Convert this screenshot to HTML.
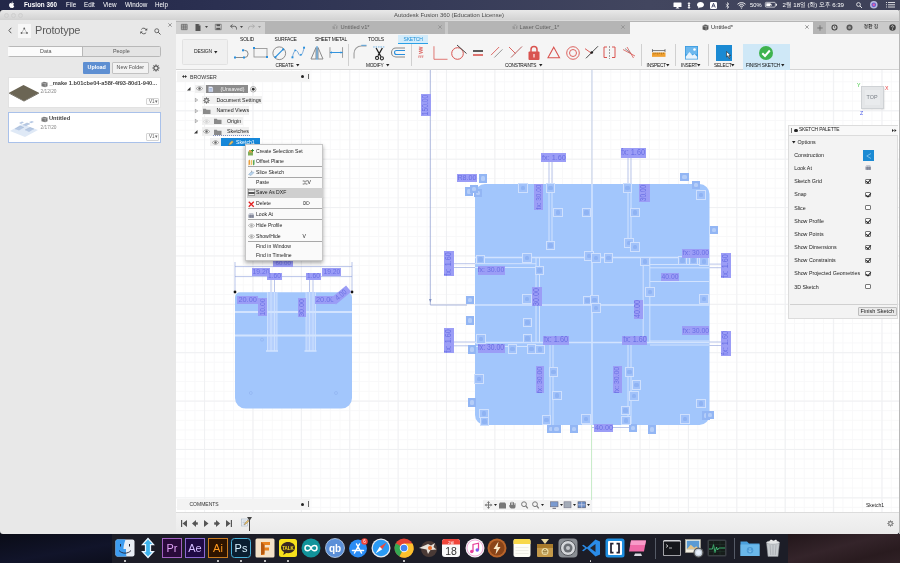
<!DOCTYPE html>
<html lang="ko">
<head>
<meta charset="utf-8">
<title>Autodesk Fusion 360 (Education License)</title>
<style>
*{box-sizing:border-box;margin:0;padding:0}
html,body{width:900px;height:563px;overflow:hidden}
body{position:relative;background:#0b0d18;font-family:"Liberation Sans","NanumGothic","Noto Sans CJK KR",sans-serif;color:#222}
.abs{position:absolute}
.t{position:absolute;white-space:nowrap;line-height:1}
svg{position:absolute;overflow:visible}
/* desktop */
#deskL{left:0;top:534px;width:112px;height:29px;background:linear-gradient(170deg,#0a0c17,#11142a 60%,#0c0e1c)}
#deskR{left:788px;top:534px;width:112px;height:29px;background:linear-gradient(165deg,#22161a,#34242a 45%,#291b1f 75%,#302126)}
#deskEdge{left:899px;top:10px;width:1px;height:524px;background:#b8b8b8}
/* mac menubar */
#menubar{left:0;top:0;width:900px;height:10px;background:linear-gradient(to right,#232849 0%,#252a4b 12%,#2b3051 24%,#363b58 48%,#42465f 72%,#3e4158 100%)}
#menubar .t{color:#fff;font-size:6.3px;top:2px}
/* window title */
#titlebar{left:0;top:10px;width:899px;height:10px;background:linear-gradient(#e9e9e9,#d2d2d2);border-top-left-radius:3px;border-top-right-radius:1px}
#titlebar .t{font-size:5.95px;color:#4c4c4c;top:2.5px}
.tl{position:absolute;top:2.5px;width:5px;height:5px;border-radius:50%;background:#dadada;border:.5px solid #cecece}
/* data panel */
#panel{left:0;top:20px;width:176.5px;height:514px;background:#e8e8e8;overflow:hidden;border-bottom-left-radius:3px}
#panel .t{color:#555}
.card{position:absolute;left:7.5px;width:153px;height:30px;background:#fff;border:.5px solid #e2e2e2}
.vbtn{position:absolute;left:137.5px;top:19.5px;width:13px;height:7.5px;border:.5px solid #d4d4d4;border-radius:1px;background:#fcfcfc;font-size:4.6px;color:#666;line-height:6.5px;padding-left:2px}
/* fusion */
#fusion{left:176px;top:20px;width:723px;height:514px;background:#fff;overflow:hidden;border-bottom-right-radius:3px}
#tabbar{left:0;top:0;width:723px;height:14px;background:linear-gradient(#dcdcdc 1.5px,#b5b5b5 1.5px)}
#tabbar .t{font-size:5.5px;color:#555;top:4.5px}
#toolbar{left:0;top:14px;width:723px;height:36px;background:#f5f5f5;border-bottom:.5px solid #d4d4d4}
#toolbar .t{font-size:5px;letter-spacing:-.2px;color:#111}
.rt{top:2.5px}
#toolbar .gl{top:30.2px;font-size:4.8px}
.sep{position:absolute;top:10px;width:.5px;height:22px;background:#d0d0d0}
#canvas{left:0;top:50px;width:723px;height:442px;background-color:#fff;
background-image:
linear-gradient(to right,#eff0f2 .6px,transparent .6px),
linear-gradient(to bottom,#eff0f2 .6px,transparent .6px),
linear-gradient(to right,#f8f8f9 .6px,transparent .6px),
linear-gradient(to bottom,#f8f8f9 .6px,transparent .6px);
background-size:48.4px 48.4px,48.4px 48.4px,9.68px 9.68px,9.68px 9.68px;
background-position:28.1px 0,0 40.3px,28.1px 0,0 40.3px}
#timeline{left:0;top:492px;width:723px;height:22px;background:linear-gradient(#f3f3f3,#eaeaea);border-top:.5px solid #dcdcdc}
/* browser */
.brow{position:absolute;height:8.6px;font-size:5.3px;line-height:8.6px;color:#222;white-space:nowrap;padding:0 2px}
/* context menu */
#ctx{left:69px;top:74px;width:78px;height:117px;background:#fafafa;border:.5px solid #c6c6c6;box-shadow:0 1.5px 4px rgba(0,0,0,.35)}
#ctx .t{font-size:5.1px;color:#222;left:10px;margin-top:-.4px}
#ctx .k{left:56.500px}
#ctx .hr{position:absolute;left:1.5px;width:74px;height:.6px;background:#a8a8a8}
/* palette */
#pal{left:612px;top:54.5px;width:110px;height:194px;background:#f3f3f3;border:.5px solid #dcdcdc}
#pal .t{font-size:5.3px;color:#222;left:5.2px}
.cb{position:absolute;left:76px;width:5.6px;height:5.6px;border:.6px solid #777;border-radius:1px;background:#fdfdfd}
.cb.on:after{content:"";position:absolute;left:1px;top:-1.2px;width:2px;height:4px;border:solid #222;border-width:0 1px 1px 0;transform:rotate(40deg)}
/* sketch */
.dim{position:absolute;background:#9b9df6;color:#6a70e4;font-size:6.3px;line-height:1;white-space:nowrap;text-align:center;overflow:hidden}
.dv{position:absolute;left:50%;top:50%;display:block;line-height:1}
.ci{position:absolute;width:9.6px;height:9.6px;background:#a1c2fa;border:.9px solid #cfe0fd}
.ci:after{content:"";position:absolute;left:1.8px;top:1.8px;width:4.2px;height:4.2px;background:#8fb3f3;border-radius:1.5px}
.ci.co{background:#93b6f4;border:0;width:8.2px;height:8.2px}
.ci.co:after{left:2px;top:2px;background:#b4cdf8}
/* dock */
#dock{left:112px;top:534px;width:676px;height:29px;background:#1c1d27}
.di{position:absolute;top:3.5px;width:20px;height:20px}
.dot{position:absolute;top:26px;width:1.6px;height:1.6px;border-radius:50%;background:#ddd}
</style>
</head>
<body>
<div id="root" style="position:absolute;left:0;top:0;width:900px;height:563px;will-change:transform">
<div id="deskL" class="abs"></div>
<div id="deskR" class="abs"></div>
<div id="deskEdge" class="abs"></div>
<div id="menubar" class="abs">
  <svg style="left:9px;top:1px" width="6" height="7.5" viewBox="0 0 24 30"><path fill="#fff" d="M17.6 15.9c0-3.300 2.700-4.900 2.800-5-1.500-2.200-3.900-2.500-4.700-2.600-2-.2-3.900 1.200-4.900 1.200s-2.600-1.200-4.200-1.100c-2.200 0-4.200 1.300-5.300 3.200-2.300 3.900-.6 9.700 1.600 12.900 1.100 1.600 2.400 3.300 4.100 3.300 1.600-.1 2.300-1.100 4.200-1.100 2 0 2.500 1.100 4.300 1 1.800 0 2.900-1.600 3.900-3.200 1.200-1.800 1.700-3.600 1.800-3.700-.1 0-3.500-1.300-3.600-4.900zM14.400 6.200c.9-1.100 1.500-2.600 1.300-4.200-1.300.1-2.900.9-3.800 2-.8.900-1.600 2.500-1.400 4 1.500.1 3-.7 3.900-1.800z"/></svg>
  <span class="t" style="left:24px;font-weight:bold">Fusion 360</span>
  <span class="t" style="left:66px">File</span>
  <span class="t" style="left:84px">Edit</span>
  <span class="t" style="left:103px">View</span>
  <span class="t" style="left:125px">Window</span>
  <span class="t" style="left:155px">Help</span>
  <!-- right status icons -->
  <svg style="left:673px;top:1.5px" width="9" height="7" viewBox="0 0 18 14"><rect x="1" y="1" width="16" height="9" rx="1" fill="#fff"/><path d="M5 13h8l-4-4z" fill="#fff"/></svg>
  <svg style="left:686.5px;top:1.5px" width="4" height="7" viewBox="0 0 8 14"><path d="M4 0v14M1.500 3h5M1.500 11h5" stroke="#fff" stroke-width="1.600" fill="none"/><circle cx="4" cy="7" r="2" fill="#fff"/></svg>
  <svg style="left:696.5px;top:1.8px" width="7" height="6.500" viewBox="0 0 14 13"><path d="M7 0C3.100 0 0 2.500 0 5.500c0 1.800 1.100 3.400 2.800 4.400L2 13l3.500-2.200c.5.100 1 .1 1.500.1 3.900 0 7-2.400 7-5.400S10.900 0 7 0z" fill="#fff"/></svg>
  <svg style="left:710px;top:1.500px" width="7" height="7" viewBox="0 0 14 14"><rect width="14" height="14" rx="2.500" fill="#fff"/><path d="M3.500 11 7 2.500 10.500 11M4.800 8h4.400" stroke="#20254a" stroke-width="1.500" fill="none"/></svg>
  <svg style="left:725px;top:1.500px" width="5" height="7" viewBox="0 0 10 14"><path d="M1.500 4 8 10 5 13V1l3 3-6.500 6" stroke="#fff" stroke-width="1.100" fill="none"/></svg>
  <svg style="left:737px;top:1.800px" width="9" height="6.500" viewBox="0 0 18 13"><path d="M1 4.500a11.500 11.500 0 0 1 16 0M3.600 7.200a7.700 7.700 0 0 1 10.800 0M6.200 9.800a4 4 0 0 1 5.600 0" stroke="#fff" stroke-width="1.800" fill="none"/><circle cx="9" cy="12" r="1.200" fill="#fff"/></svg>
  <span class="t" style="left:750px;font-size:5.8px;top:2.9px">50%</span>
  <svg style="left:764.5px;top:2.300px" width="12" height="5.500" viewBox="0 0 24 11"><rect x=".7" y=".7" width="20" height="9.600" rx="2" fill="none" stroke="#fff" stroke-width="1.300"/><rect x="22" y="3.500" width="1.800" height="4" fill="#fff"/><rect x="2.500" y="2.500" width="8" height="6" fill="#fff"/><path d="M12 1.500 9 6h3l-1 3.500L14.500 5h-3z" fill="#fff"/></svg>
  <span class="t" style="left:782.5px;font-size:6.1px;top:2px">2월 18일 (화) 오후 6:39</span>
  <svg style="left:856px;top:1.800px" width="6.500" height="6.500" viewBox="0 0 13 13"><circle cx="5" cy="5" r="3.800" fill="none" stroke="#fff" stroke-width="1.500"/><path d="m8 8 4 4" stroke="#fff" stroke-width="1.700"/></svg>
  <svg style="left:869.5px;top:1.200px" width="7.600" height="7.600" viewBox="0 0 16 16"><circle cx="8" cy="8" r="8" fill="#b8bce0"/><circle cx="8" cy="8" r="5" fill="#6a5fd0"/><circle cx="8" cy="8" r="2.500" fill="#e25fa8"/></svg>
  <svg style="left:886px;top:2.300px" width="9" height="5.500" viewBox="0 0 18 11"><path d="M0 1h2M4 1h14M0 5.500h2M4 5.500h14M0 10h2M4 10h14" stroke="#fff" stroke-width="1.600"/></svg>
</div>

<div id="titlebar" class="abs">
  <div class="tl" style="left:4px"></div><div class="tl" style="left:11px"></div><div class="tl" style="left:18px"></div>
  <span class="t" style="left:394px">Autodesk Fusion 360 (Education License)</span>
</div>
<div id="panel" class="abs">
  <!-- header -->
  <svg style="left:7.500px;top:7px" width="4" height="7" viewBox="0 0 4 7"><path d="M3.300.8.900 3.500l2.400 2.700" stroke="#555" stroke-width="1" fill="none"/></svg>
  <div class="abs" style="left:17.500px;top:4px;width:13.500px;height:13.500px;background:#f7f7f7"></div>
  <svg style="left:20px;top:7px" width="8.500" height="7.500" viewBox="0 0 17 15"><path d="M8.500 3 3 12h11z" fill="none" stroke="#888" stroke-width="1"/><circle cx="8.500" cy="3" r="1.800" fill="#666"/><circle cx="3" cy="12" r="1.800" fill="#666"/><circle cx="14" cy="12" r="1.800" fill="#666"/></svg>
  <span class="t" style="left:35px;top:4.800px;font-size:11px;letter-spacing:-.2px;color:#5a5a5a">Prototype</span>
  <svg style="left:140px;top:7px" width="7.500" height="8" viewBox="0 0 15 16"><path d="M12.500 6A5.500 5.500 0 0 0 2.600 5M2.500 10a5.500 5.500 0 0 0 9.900 1" fill="none" stroke="#555" stroke-width="1.800"/><path d="M14.500 2v5h-5zM.5 14V9h5z" fill="#555"/></svg>
  <svg style="left:154px;top:7.500px" width="7" height="7" viewBox="0 0 14 14"><circle cx="5.500" cy="5.500" r="4" fill="none" stroke="#555" stroke-width="1.700"/><path d="m8.500 8.500 4.500 4.500" stroke="#555" stroke-width="2"/></svg>
  <svg style="left:167.500px;top:2.500px" width="4" height="4" viewBox="0 0 4 4"><path d="M.3.300l3.400 3.400M3.700.3.300 3.700" stroke="#777" stroke-width=".7"/></svg>
  <!-- tabs -->
  <div class="abs" style="left:7.500px;top:26px;width:153px;height:11px;border:.7px solid #b8b8b8;border-radius:1.500px;background:#e4e4e4"></div>
  <div class="abs" style="left:8.400px;top:26.700px;width:74.800px;height:9.600px;background:#fbfbfb;border-right:.7px solid #b8b8b8"></div>
  <span class="t" style="left:40px;top:29px;font-size:5.4px">Data</span>
  <span class="t" style="left:113px;top:29px;font-size:5.4px">People</span>
  <!-- buttons -->
  <div class="abs" style="left:83px;top:41.500px;width:26.500px;height:12px;background:#5e8fd2;border-radius:1px"></div>
  <span class="t" style="left:87.500px;top:45px;font-size:5.4px;color:#fff;font-weight:bold">Upload</span>
  <div class="abs" style="left:112px;top:41.500px;width:36.500px;height:12px;background:#f2f2f2;border:.5px solid #c2c2c2;border-radius:1px"></div>
  <span class="t" style="left:116.500px;top:45px;font-size:5.4px">New Folder</span>
  <svg style="left:151.500px;top:43.500px" width="8" height="8" viewBox="0 0 16 16"><circle cx="8" cy="8" r="4.200" fill="none" stroke="#555" stroke-width="2.200"/><path d="M8 .8v2.400M8 12.800v2.400M.8 8h2.400M12.800 8h2.400M2.900 2.900l1.700 1.700M11.400 11.400l1.700 1.700M13.100 2.900l-1.700 1.700M4.600 11.400l-1.700 1.700" stroke="#555" stroke-width="2"/></svg>
  <!-- card 1 -->
  <div class="card" style="top:57px;height:30.5px">
    <svg style="left:.5px;top:5.500px" width="30" height="17.500" viewBox="0 0 29 17"><path d="M0 8.500 14 1l15 7.500L14.500 16.500z" fill="#6b6554"/><path d="M0 8.500 14.500 16.500 29 8.500v.8L14.500 17 0 9.300z" fill="#4a463a"/></svg>
    <svg style="left:32px;top:2.500px" width="7" height="7" viewBox="0 0 15 14"><path d="M1 3.500 6 1l8 1.500v8L9 13 1 11z" fill="#777"/><path d="M1 3.500 9 5v8M9 5l5-2.500" stroke="#eee" stroke-width=".8" fill="none"/></svg>
    <span class="t" style="left:41px;top:3.300px;font-size:5.7px;font-weight:bold;color:#444">_make 1.b01cbe04-a58f-4f93-80d1-940...</span>
    <span class="t" style="left:32px;top:11.800px;font-size:4.8px;color:#888">2/12/20</span>
    <div class="vbtn">V1&#9662;</div>
  </div>
  <!-- card 2 -->
  <div class="card" style="top:92px;height:31px;border:.8px solid #a9c1ea">
    <svg style="left:1.500px;top:5px" width="28" height="19" viewBox="0 0 28 19"><path d="M0 13 12 6l16 6-13 7z" fill="#dfe9f6"/><path d="M5 11l5-3 4 1.500-5 3zM13 7l4-2 3 1-4 2.200zM15 12l5-2.500 4 1.500-5 3zM9 5l3-1.500 2 .8-3 1.600zM19 4l3-1 2 1-3 1.300z" fill="#b7c9e4"/><path d="M5 11l5-3 4 1.500M13 7l4-2 3 1M15 12l5-2.500 4 1.500" stroke="#8fa6c8" stroke-width=".4" fill="none"/></svg>
    <svg style="left:32px;top:2.500px" width="7" height="7" viewBox="0 0 15 14"><path d="M1 3.500 6 1l8 1.500v8L9 13 1 11z" fill="#777"/><path d="M1 3.500 9 5v8M9 5l5-2.500" stroke="#eee" stroke-width=".8" fill="none"/></svg>
    <span class="t" style="left:40.500px;top:3px;font-size:5.7px;font-weight:bold;color:#444">Untitled</span>
    <span class="t" style="left:32px;top:12.800px;font-size:4.8px;color:#888">2/17/20</span>
    <div class="vbtn" style="top:20px">V1&#9662;</div>
  </div>
</div>
<div class="abs" style="left:176.2px;top:20px;width:.8px;height:514px;background:#c6c6c6"></div>
<div id="fusion" class="abs">
  <div id="tabbar" class="abs">
    <!-- quick access -->
    <div class="abs" style="left:0;top:1.5px;width:88.500px;height:12.5px;background:#d1d1d1"></div>
    <svg style="left:5px;top:4px" width="6.500" height="6" viewBox="0 0 13 12"><path d="M.7.700h11.600v10.600H.7zM.7 4.200h11.600M.7 7.800h11.600M4.600.7v10.600M8.400.7v10.600" fill="none" stroke="#555" stroke-width="1.300"/></svg>
    <svg style="left:19px;top:3.500px" width="6" height="7" viewBox="0 0 12 14"><path d="M1 0h6.500L11 3.500V14H1z" fill="#555"/><path d="M7.500 0v3.500H11" fill="#999"/></svg>
    <svg style="left:28.500px;top:6px" width="3" height="2" viewBox="0 0 6 4"><path d="M0 0h6L3 4z" fill="#444"/></svg>
    <svg style="left:39px;top:4px" width="6.500" height="6" viewBox="0 0 13 12"><path d="M.6.600h11.800v10.800H.6z" fill="none" stroke="#555" stroke-width="1.200"/><path d="M3 .6h7v4H3zM2.500 7.500h8v4h-8z" fill="#555"/></svg>
    <svg style="left:54px;top:4px" width="7" height="6" viewBox="0 0 14 12"><path d="M5 1 1 4.500 5 8M1.500 4.500H9a4 4 0 0 1 4 4V11" fill="none" stroke="#555" stroke-width="1.800"/></svg>
    <svg style="left:64px;top:6px" width="3" height="2" viewBox="0 0 6 4"><path d="M0 0h6L3 4z" fill="#444"/></svg>
    <svg style="left:71.500px;top:4px" width="7" height="6" viewBox="0 0 14 12"><path d="M9 1l4 3.500L9 8M12.500 4.500H5a4 4 0 0 0-4 4V11" fill="none" stroke="#aaa" stroke-width="1.800"/></svg>
    <svg style="left:82px;top:6px" width="3" height="2" viewBox="0 0 6 4"><path d="M0 0h6L3 4z" fill="#999"/></svg>
    <!-- doc tabs -->
    <div class="abs" style="left:269.300px;top:1.500px;width:3px;height:12.500px;background:#c9c9c9"></div>
    <svg style="left:155.5px;top:4px" width="6" height="6" viewBox="0 0 12 12"><path d="M1 3 5 1l6 1.200V9L7 11 1 9.500z" fill="#999"/><path d="M1 3l6 1.300V11M7 4.300l4-2" stroke="#ddd" stroke-width=".8" fill="none"/></svg>
    <span class="t" style="left:164.5px;color:#606060;font-size:5.7px">Untitled v1*</span>
    <svg style="left:262px;top:5px" width="4" height="4" viewBox="0 0 4 4"><path d="M.3.300l3.400 3.400M3.700.3.300 3.700" stroke="#8a8a8a" stroke-width=".7"/></svg>
    <svg style="left:335.5px;top:4px" width="6" height="6" viewBox="0 0 12 12"><path d="M1 3 5 1l6 1.200V9L7 11 1 9.500z" fill="#999"/><path d="M1 3l6 1.300V11M7 4.300l4-2" stroke="#ddd" stroke-width=".8" fill="none"/></svg>
    <span class="t" style="left:343.5px;color:#606060;font-size:5.7px">Laser Cutter_1*</span>
    <svg style="left:444.500px;top:5px" width="4" height="4" viewBox="0 0 4 4"><path d="M.3.300l3.400 3.400M3.700.3.300 3.700" stroke="#8a8a8a" stroke-width=".7"/></svg>
    <!-- active tab -->
    <div class="abs" style="left:454px;top:1.5px;width:182.500px;height:12.5px;background:#f5f5f5"></div>
    <svg style="left:526px;top:3.500px" width="7" height="7" viewBox="0 0 12 12"><path d="M1 3 5 1l6 1.200V9L7 11 1 9.500z" fill="#555"/><path d="M1 3l6 1.300V11M7 4.300l4-2" stroke="#eee" stroke-width=".8" fill="none"/></svg>
    <span class="t" style="left:535px;color:#333;font-size:5.8px">Untitled*</span>
    <svg style="left:629px;top:5px" width="4" height="4" viewBox="0 0 4 4"><path d="M.3.300l3.400 3.400M3.700.3.300 3.700" stroke="#777" stroke-width=".7"/></svg>
    <div class="abs" style="left:636.5px;top:1.5px;width:86.5px;height:12.5px;background:#cacaca"></div>
    <div class="abs" style="left:637px;top:1.500px;width:13px;height:12.500px;background:#b4b4b4"></div>
    <svg style="left:640.500px;top:4.500px" width="6" height="6" viewBox="0 0 10 10"><path d="M5 .5v9M.5 5h9" stroke="#666" stroke-width="1.300"/></svg>
    <svg style="left:655px;top:3.500px" width="7" height="7" viewBox="0 0 14 14"><circle cx="7" cy="7" r="5" fill="none" stroke="#444" stroke-width="2.200"/><path d="M7 4v3.300l2 1.200" stroke="#444" stroke-width="1.300" fill="none"/></svg>
    <svg style="left:670px;top:3.500px" width="7" height="7" viewBox="0 0 14 14"><circle cx="7" cy="7" r="6" fill="#555"/><circle cx="7" cy="7" r="3" fill="#999"/></svg>
    <span class="t" style="left:687.500px;font-size:4.800px;top:4.800px;color:#333;font-weight:bold">정환 김</span>
    <svg style="left:713px;top:3.500px" width="7" height="7" viewBox="0 0 14 14"><circle cx="7" cy="7" r="6.500" fill="#444"/><path d="M5 5.500a2 2 0 1 1 3 1.700c-.7.500-1 .8-1 1.800" stroke="#eee" stroke-width="1.400" fill="none"/><circle cx="7" cy="11" r=".9" fill="#eee"/></svg>
  </div>

  <div id="toolbar" class="abs">
    <!-- workspace button -->
    <div class="abs" style="left:6px;top:5px;width:45.500px;height:25.500px;background:#f0f0f0;border:.5px solid #e2e2e2;border-radius:1.500px"></div>
    <span class="t" style="left:18px;top:15px;color:#222">DESIGN</span>
    <svg style="left:37.500px;top:16.500px" width="3.500" height="2.400" viewBox="0 0 7 5"><path d="M0 0h7L3.500 5z" fill="#222"/></svg>
    <!-- ribbon tabs -->
    <span class="t rt" style="left:64px">SOLID</span>
    <span class="t rt" style="left:98.500px">SURFACE</span>
    <span class="t rt" style="left:139px">SHEET METAL</span>
    <span class="t rt" style="left:192px">TOOLS</span>
    <div class="abs" style="left:221.500px;top:.5px;width:30px;height:9px;background:#d3ecfb;border-bottom:1px solid #2aa0e6"></div>
    <span class="t rt" style="left:227.500px;color:#1b8fd8">SKETCH</span>
    <!-- CREATE -->
    <svg style="left:58px;top:13px" width="16" height="12" viewBox="0 0 16 12"><path d="M1 10.500h9.500a3.600 3.600 0 0 0 0-7.200H9" fill="none" stroke="#8a8a8a" stroke-width="1"/><rect x="0" y="9.500" width="2" height="2" fill="#2a8fdc"/><rect x="8" y="2.300" width="2" height="2" fill="#2a8fdc"/><rect x="9" y="9.500" width="2" height="2" fill="#2a8fdc"/></svg>
    <svg style="left:77px;top:13px" width="15" height="11" viewBox="0 0 15 11"><rect x="1" y="1.500" width="13" height="8.500" fill="none" stroke="#999" stroke-width=".9"/><rect x="0" y="0" width="2" height="2" fill="#2a8fdc"/><rect x="13" y="9" width="2" height="2" fill="#2a8fdc"/></svg>
    <svg style="left:96px;top:11.500px" width="14.500" height="14.500" viewBox="0 0 15 15"><circle cx="7.500" cy="7.500" r="6.600" fill="none" stroke="#8a8a8a" stroke-width="1"/><path d="M3.500 11.500l8-8" stroke="#2a8fdc" stroke-width="1.200"/><rect x="2.500" y="10.500" width="2" height="2" fill="#2a8fdc"/><rect x="10.500" y="2.500" width="2" height="2" fill="#2a8fdc"/></svg>
    <svg style="left:115px;top:12px" width="14.500" height="13" viewBox="0 0 15 13"><path d="M1.500 11.500C3 3 6 3 7.500 7s4 4 6-5.500" fill="none" stroke="#6a9fd4" stroke-width=".9"/><rect x="3.500" y="3.500" width="1.600" height="1.600" fill="#2a8fdc"/><rect x="9.500" y="8" width="1.600" height="1.600" fill="#2a8fdc"/><rect x=".5" y="10.500" width="2" height="2" fill="#2a8fdc"/><rect x="12.500" y=".5" width="2" height="2" fill="#2a8fdc"/></svg>
    <svg style="left:134px;top:11.500px" width="14" height="14" viewBox="0 0 14 14"><path d="M6 1.500 1 13h5zM8 1.500 13 13H8z" fill="none" stroke="#8a8a8a" stroke-width="1"/><path d="M7 0v14" stroke="#2a8fdc" stroke-width=".9"/></svg>
    <svg style="left:152.500px;top:13px" width="14.500" height="11" viewBox="0 0 15 11"><path d="M1 0v11M14 0v11" stroke="#999" stroke-width="1"/><path d="M1 5.500h13" stroke="#2a8fdc" stroke-width="1"/><path d="M1 5.500l2-1.300v2.600zM14 5.500l-2-1.300v2.600z" fill="#2a8fdc"/></svg>
    <span class="t gl" style="left:99.500px">CREATE</span>
    <svg style="left:119.5px;top:30px" width="3.500" height="2.400" viewBox="0 0 7 5"><path d="M0 0h7L3.500 5z" fill="#222"/></svg>
    <div class="sep" style="left:172px"></div>
    <!-- MODIFY -->
    <svg style="left:176.500px;top:11px" width="13.500" height="13.500" viewBox="0 0 13 13"><path d="M1 13V8a7 7 0 0 1 7-7h5" fill="none" stroke="#999" stroke-width="1"/><path d="M8 .3h5" stroke="#2a8fdc" stroke-width=".7"/></svg>
    <svg style="left:196.500px;top:11.500px" width="12" height="14.500" viewBox="0 0 12 15"><path d="M3 2l5 9M9.500 2 5 10" stroke="#222" stroke-width="1.300"/><circle cx="4" cy="12.300" r="1.600" fill="none" stroke="#222" stroke-width="1.100"/><circle cx="9" cy="12.800" r="1.600" fill="none" stroke="#222" stroke-width="1.100"/><path d="M0 1h12" stroke="#2a8fdc" stroke-width=".7" stroke-dasharray="1.500 1"/></svg>
    <svg style="left:214px;top:13px" width="15" height="11" viewBox="0 0 15 11"><path d="M15 1H6a4.500 4.500 0 0 0 0 9h9" fill="none" stroke="#8a8a8a" stroke-width="1.100"/><path d="M15 3.500H6.500a2 2 0 0 0 0 4H15" fill="none" stroke="#2a8fdc" stroke-width="1.100"/></svg>
    <span class="t gl" style="left:190px">MODIFY</span>
    <svg style="left:209.5px;top:30px" width="3.500" height="2.400" viewBox="0 0 7 5"><path d="M0 0h7L3.500 5z" fill="#222"/></svg>
    <div class="sep" style="left:234.500px"></div>
    <!-- CONSTRAINTS -->
    <svg style="left:242px;top:12px" width="5.500" height="13" viewBox="0 0 6 13"><path d="M1 .5 5 1.500 1 2.800 5 4 1 5.300 5 6.500 1 7.800" stroke="#d9534f" stroke-width=".8" fill="none"/><path d="M.8 12.500v-2.500h1.200M.8 11.200h1M2.800 12.500V10H4M2.800 11.200h1M4.800 12.500V10H6M4.800 11.200h1" stroke="#d9534f" stroke-width=".5" fill="none"/></svg>
    <svg style="left:256.500px;top:11.500px" width="14.500" height="14" viewBox="0 0 15 14"><path d="M1 0v13.500h14" fill="none" stroke="#d9534f" stroke-width=".8"/></svg>
    <svg style="left:274.500px;top:11px" width="16" height="15" viewBox="0 0 16 15"><circle cx="6.500" cy="8.500" r="5.800" fill="none" stroke="#d9534f" stroke-width="1"/><path d="M6 0l9.500 8.500" stroke="#444" stroke-width="1"/></svg>
    <svg style="left:296.500px;top:16px" width="10" height="6" viewBox="0 0 10 6"><path d="M0 1h10" stroke="#333" stroke-width="1.600"/><path d="M0 5h10" stroke="#d9534f" stroke-width="1.600"/></svg>
    <svg style="left:314.500px;top:13px" width="11.500" height="10.500" viewBox="0 0 12 11"><path d="M0 8.500 8.500 0" stroke="#d9534f" stroke-width=".9"/><path d="M3.500 11 12 2.500" stroke="#888" stroke-width=".9"/></svg>
    <svg style="left:333px;top:12px" width="13" height="12" viewBox="0 0 13 12"><path d="M0 1l6.500 6.500" stroke="#d9534f" stroke-width=".9"/><path d="M13 .5 2 11.500" stroke="#b05050" stroke-width=".9"/></svg>
    <svg style="left:352px;top:10.500px" width="12" height="15" viewBox="0 0 12 15"><path d="M3 7V4.500a3 3 0 0 1 6 0V7" fill="none" stroke="#d9534f" stroke-width="1.500"/><rect x=".5" y="6.500" width="11" height="8.500" rx="1" fill="#d9534f"/><rect x="5.200" y="9" width="1.600" height="3.500" fill="#f6c9c7"/></svg>
    <svg style="left:370.500px;top:12px" width="13.500" height="13" viewBox="0 0 14 13"><path d="M7 1 13 12H1z" fill="none" stroke="#d9534f" stroke-width="1.100"/></svg>
    <svg style="left:389.500px;top:11.500px" width="14" height="14" viewBox="0 0 14 14"><circle cx="7" cy="7" r="6.300" fill="none" stroke="#d9534f" stroke-width=".9"/><circle cx="7" cy="7" r="3.500" fill="none" stroke="#d9534f" stroke-width=".9"/></svg>
    <svg style="left:409px;top:12px" width="13.500" height="13" viewBox="0 0 14 13"><path d="M0 2.500l7 5" stroke="#d9534f" stroke-width="1"/><path d="M13.500 0 1 12.500" stroke="#444" stroke-width="1"/><circle cx="7" cy="6.500" r="1.400" fill="#222"/></svg>
    <svg style="left:427px;top:12px" width="13" height="13" viewBox="0 0 13 13"><path d="M4 1H1v10.500h3M9 1h3v10.500H9" fill="none" stroke="#d9534f" stroke-width="1"/><path d="M6.500 0v13" stroke="#888" stroke-width=".8" stroke-dasharray="2 1"/></svg>
    <svg style="left:446.500px;top:12px" width="13" height="13" viewBox="0 0 13 13"><path d="M0 3.500l12 6.500" stroke="#d9534f" stroke-width=".8"/><path d="M4 1l6.500 11" stroke="#d9534f" stroke-width=".8"/><path d="M2 2.500 7.500 7" stroke="#666" stroke-width=".7"/></svg>
    <span class="t gl" style="left:329px;letter-spacing:-.3px">CONSTRAINTS</span>
    <svg style="left:363.0px;top:30px" width="3.500" height="2.400" viewBox="0 0 7 5"><path d="M0 0h7L3.500 5z" fill="#222"/></svg>
    <div class="sep" style="left:464.500px"></div>
    <!-- INSPECT -->
    <svg style="left:475.500px;top:15px" width="13.500" height="8" viewBox="0 0 14 8"><path d="M.5 0v3M13.500 0v3M.5 1.500h13" stroke="#555" stroke-width=".8" fill="none"/><rect x="0" y="3.500" width="14" height="4.500" fill="#f0a030"/><path d="M2 3.500v2M4 3.500v1.500M6 3.500v2M8 3.500v1.500M10 3.500v2M12 3.500v1.500" stroke="#7a4a00" stroke-width=".5"/></svg>
    <span class="t gl" style="left:470.500px">INSPECT</span>
    <svg style="left:489.5px;top:30px" width="3.500" height="2.400" viewBox="0 0 7 5"><path d="M0 0h7L3.500 5z" fill="#222"/></svg>
    <div class="sep" style="left:499px"></div>
    <!-- INSERT -->
    <svg style="left:509px;top:12px" width="13" height="13.500" viewBox="0 0 13 13.500"><rect width="13" height="13.500" fill="#3d9be0"/><rect x=".8" y=".8" width="11.400" height="7.500" fill="#6cb8ee"/><circle cx="9.500" cy="3.500" r="1.300" fill="#fff"/><path d="M.8 10.500 4.500 6l3 3.500L9.500 8l2.700 2.700v2H.8z" fill="#e8f3fc"/></svg>
    <span class="t gl" style="left:505px">INSERT</span>
    <svg style="left:521.0px;top:30px" width="3.500" height="2.400" viewBox="0 0 7 5"><path d="M0 0h7L3.500 5z" fill="#222"/></svg>
    <div class="sep" style="left:531.500px"></div>
    <!-- SELECT -->
    <div class="abs" style="left:539.500px;top:10.500px;width:16.500px;height:16.500px;background:#1b8ad3"></div>
    <svg style="left:549.500px;top:17px" width="5" height="8" viewBox="0 0 10 16"><path d="M1 1v11l2.700-2.400L6 15l2-.9-2.200-5.200H9.500z" fill="#fff" stroke="#222" stroke-width="1.200"/></svg>
    <span class="t gl" style="left:538px">SELECT</span>
    <svg style="left:555.0px;top:30px" width="3.500" height="2.400" viewBox="0 0 7 5"><path d="M0 0h7L3.500 5z" fill="#222"/></svg>
    <!-- FINISH SKETCH -->
    <div class="abs" style="left:566.500px;top:9.500px;width:47px;height:26px;background:#cfe8f7"></div>
    <svg style="left:582.500px;top:11.500px" width="14" height="14" viewBox="0 0 14 14"><circle cx="7" cy="7" r="7" fill="#3fb34f"/><path d="M3.300 7.300 6 10l4.800-5.500" fill="none" stroke="#fff" stroke-width="2"/></svg>
    <span class="t gl" style="left:570px">FINISH SKETCH</span>
    <svg style="left:604.5px;top:30px" width="3.500" height="2.400" viewBox="0 0 7 5"><path d="M0 0h7L3.500 5z" fill="#222"/></svg>
  </div>
<div id="canvas" class="abs">
<svg style="left:0;top:0" width="723" height="442" viewBox="176 70 723 442"><path d="M430.3 70V305H467" fill="none" stroke="#98a6d4" stroke-width=".8"/><path d="M430.300 302.500l-1.300-3.500h2.600z" fill="#8090c0"/><path d="M592 70V184" stroke="#b9c6e6" stroke-width=".8"/><path d="M591.500 425V500" stroke="#bfeabf" stroke-width=".8"/><path d="M240 292.3H347a5 5 0 0 1 5 5V398a10.500 10.500 0 0 1-10.500 10.500H245.500A10.500 10.500 0 0 1 235 398V297.300a5 5 0 0 1 5-5z" fill="#a2c6fc"/><path d="M267.400 292.300h9.600V351h-9.600zM306 292.300h9.700V351H306z" fill="#b6d0fd"/><path d="M235 312H352M235 335.5H352" stroke="#d2e3fe" stroke-width="2"/><path d="M267.500 292V351M271 292V351M274.500 292V351M277 292V351M306 292V351M309.500 292V351M313 292V351M315.500 292V351" stroke="#d2e3fe" stroke-width=".8"/><path d="M266 351h12M304.500 351h12" stroke="#d2e3fe" stroke-width="1.500"/><path d="M235 266.600H352M235 276.600H352M235 262V290M352 262V290M271 280V292M274.500 280V292M309.500 280V292M313 280V292" stroke="#8c9ddc" stroke-width=".6" fill="none"/><circle cx="235" cy="292" r="1.400" fill="#111"/><circle cx="352" cy="292" r="1.400" fill="#111"/><circle cx="262" cy="339.7" r="1.500" fill="none" stroke="#8fb0ee" stroke-width=".6"/><circle cx="250.8" cy="393" r="1.500" fill="none" stroke="#8fb0ee" stroke-width=".6"/><circle cx="336" cy="393" r="1.500" fill="none" stroke="#8fb0ee" stroke-width=".6"/><path d="M485 184H699.5A10 10 0 0 1 709.5 194V415A10 10 0 0 1 699.5 425H485A10 10 0 0 1 475 415V194A10 10 0 0 1 485 184z" fill="#a2c6fc"/><path d="M475 257.500H709.500M475 305H709.500M475 342.500H709.500M592 184V425" stroke="#d2e3fe" stroke-width="1.600"/><path d="M549 184V250M552 184V250M628 184V243M631 184V243M550 343V425M553 343V425M628 343V425M631 343V425M475 263.700H536M475 267.500H536M536 257V343M539.500 257V343M475 346.500H540M650 264.500H709M650 267.800H709M643.200 257V343M649.800 257V343M650 281.500H709M650 341H709M650 345H709" stroke="#d2e3fe" stroke-width="1" fill="none"/><path d="M549 162V184M552 162V184M628 157V184M631 157V184M454 263.700H475M454 267.500H475M454 342H475M454 345.800H475M709.500 264.100H723M709.500 267.700H723M709.500 342H723M709.500 345.500H723M592 427.500H630" stroke="#8c9ddc" stroke-width=".6" fill="none"/></svg>
<div class="ci co" style="left:302.9px;top:104.4px"></div>
<div class="ci co" style="left:288.9px;top:117.4px"></div>
<div class="ci co" style="left:297.9px;top:118.9px"></div>
<div class="ci co" style="left:293.9px;top:114.9px"></div>
<div class="ci" style="left:342.2px;top:113.2px"></div>
<div class="ci" style="left:369.7px;top:113.2px"></div>
<div class="ci" style="left:377.2px;top:137.7px"></div>
<div class="ci" style="left:369.7px;top:170.7px"></div>
<div class="ci" style="left:405.7px;top:137.7px"></div>
<div class="ci" style="left:446.7px;top:113.2px"></div>
<div class="ci" style="left:454.2px;top:137.7px"></div>
<div class="ci" style="left:448.2px;top:168.2px"></div>
<div class="ci" style="left:454.2px;top:172.2px"></div>
<div class="ci co" style="left:504.4px;top:102.9px"></div>
<div class="ci co" style="left:515.9px;top:110.9px"></div>
<div class="ci" style="left:520.2px;top:120.2px"></div>
<div class="ci co" style="left:533.9px;top:155.9px"></div>
<div class="ci" style="left:299.7px;top:184.7px"></div>
<div class="ci" style="left:346.2px;top:183.2px"></div>
<div class="ci" style="left:408.2px;top:181.2px"></div>
<div class="ci" style="left:415.2px;top:183.2px"></div>
<div class="ci" style="left:427.7px;top:183.2px"></div>
<div class="ci" style="left:464.2px;top:186.7px"></div>
<div class="ci" style="left:501.7px;top:185.7px"></div>
<div class="ci" style="left:512.7px;top:185.7px"></div>
<div class="ci" style="left:523.2px;top:186.7px"></div>
<div class="ci" style="left:358.7px;top:195.7px"></div>
<div class="ci co" style="left:289.9px;top:225.9px"></div>
<div class="ci" style="left:346.2px;top:224.2px"></div>
<div class="ci" style="left:406.7px;top:225.7px"></div>
<div class="ci" style="left:413.7px;top:225.2px"></div>
<div class="ci" style="left:415.2px;top:233.2px"></div>
<div class="ci" style="left:469.2px;top:217.2px"></div>
<div class="ci" style="left:523.4px;top:224px"></div>
<div class="ci co" style="left:290.3px;top:246.4px"></div>
<div class="ci" style="left:346.7px;top:247.7px"></div>
<div class="ci" style="left:346.7px;top:263.7px"></div>
<div class="ci" style="left:300.2px;top:264.2px"></div>
<div class="ci co" style="left:291.9px;top:275.4px"></div>
<div class="ci" style="left:331.7px;top:274.2px"></div>
<div class="ci" style="left:350.7px;top:274.2px"></div>
<div class="ci" style="left:359.2px;top:274.7px"></div>
<div class="ci" style="left:298.2px;top:304.2px"></div>
<div class="ci" style="left:372.7px;top:297.2px"></div>
<div class="ci" style="left:376.2px;top:320.7px"></div>
<div class="ci" style="left:365.7px;top:345.2px"></div>
<div class="ci" style="left:405.7px;top:345.7px"></div>
<div class="ci co" style="left:291.9px;top:328.4px"></div>
<div class="ci" style="left:303.2px;top:338.7px"></div>
<div class="ci" style="left:303.7px;top:346.7px"></div>
<div class="ci co" style="left:370.9px;top:354.9px"></div>
<div class="ci co" style="left:376.4px;top:354.9px"></div>
<div class="ci co" style="left:393.9px;top:354.9px"></div>
<div class="ci co" style="left:452.9px;top:353.9px"></div>
<div class="ci co" style="left:471.9px;top:355.4px"></div>
<div class="ci" style="left:448.7px;top:297.2px"></div>
<div class="ci" style="left:455.7px;top:310.2px"></div>
<div class="ci" style="left:453.2px;top:321.2px"></div>
<div class="ci" style="left:444.7px;top:335.7px"></div>
<div class="ci" style="left:445.2px;top:345.7px"></div>
<div class="ci" style="left:405.2px;top:344.2px"></div>
<div class="ci" style="left:504.2px;top:344.2px"></div>
<div class="ci" style="left:520.2px;top:328.7px"></div>
<div class="ci co" style="left:525.9px;top:341.4px"></div>
<div class="ci co" style="left:529.9px;top:340.9px"></div>
<div class="dim" style="left:245px;top:24px;width:10px;height:22px;font-size:8.2px"><span class="dv" style="transform:translate(-50%,-50%) rotate(-90deg) scaleX(0.83)">150.00</span></div>
<div class="dim" style="left:97.4px;top:189.5px;width:19.6px;height:7.1px;font-size:6.2px"><span class="dv" style="transform:translate(-50%,-50%) scaleX(1.00)">60.00</span></div>
<div class="dim" style="left:75.7px;top:198px;width:18.7px;height:7.7px;font-size:6.8px"><span class="dv" style="transform:translate(-50%,-50%) scaleX(1.00)">19.20</span></div>
<div class="dim" style="left:91.4px;top:202.7px;width:14.2px;height:7.5px;font-size:6.6px"><span class="dv" style="transform:translate(-50%,-50%) scaleX(1.00)">1.60</span></div>
<div class="dim" style="left:130px;top:202.7px;width:15px;height:7.5px;font-size:6.6px"><span class="dv" style="transform:translate(-50%,-50%) scaleX(1.00)">1.60</span></div>
<div class="dim" style="left:146.4px;top:198px;width:19px;height:7.7px;font-size:6.8px"><span class="dv" style="transform:translate(-50%,-50%) scaleX(1.00)">19.20</span></div>
<div class="dim" style="left:61px;top:226px;width:21.3px;height:8.4px;font-size:7.4px"><span class="dv" style="transform:translate(-50%,-50%) scaleX(1.00)">20.00</span></div>
<div class="dim" style="left:82.3px;top:228.3px;width:9.1px;height:18.2px;font-size:8px"><span class="dv" style="transform:translate(-50%,-50%) rotate(-90deg) scaleX(0.85)">10.00</span></div>
<div class="dim" style="left:121.6px;top:228.3px;width:8.4px;height:18.7px;font-size:7.4px"><span class="dv" style="transform:translate(-50%,-50%) rotate(-90deg) scaleX(0.95)">30.00</span></div>
<div class="dim" style="left:139px;top:226px;width:20.4px;height:8.4px;font-size:7.4px"><span class="dv" style="transform:translate(-50%,-50%) scaleX(1.00)">20.00</span></div>
<div class="dim" style="left:365px;top:83px;width:25px;height:9px;font-size:7.9px"><span class="dv" style="transform:translate(-50%,-50%) scaleX(0.92)">fx: 1.60</span></div>
<div class="dim" style="left:444.5px;top:78px;width:25.3px;height:9.5px;font-size:8.2px"><span class="dv" style="transform:translate(-50%,-50%) scaleX(0.90)">fx: 1.60</span></div>
<div class="dim" style="left:280.8px;top:104px;width:20.2px;height:8.3px;font-size:7.3px"><span class="dv" style="transform:translate(-50%,-50%) scaleX(0.98)">R8.00</span></div>
<div class="dim" style="left:358px;top:114px;width:9px;height:26px;font-size:7.9px"><span class="dv" style="transform:translate(-50%,-50%) rotate(-90deg) scaleX(0.82)">fx: 30.00</span></div>
<div class="dim" style="left:462.7px;top:114px;width:11px;height:17.6px;font-size:8.2px"><span class="dv" style="transform:translate(-50%,-50%) rotate(-90deg) scaleX(0.80)">30.00</span></div>
<div class="dim" style="left:268px;top:181px;width:10px;height:25px;font-size:8.2px"><span class="dv" style="transform:translate(-50%,-50%) rotate(-90deg) scaleX(0.88)">fx: 1.60</span></div>
<div class="dim" style="left:301.5px;top:195.5px;width:27.8px;height:9px;font-size:7.9px"><span class="dv" style="transform:translate(-50%,-50%) scaleX(0.88)">fx: 30.00</span></div>
<div class="dim" style="left:356px;top:217px;width:10px;height:19px;font-size:8.2px"><span class="dv" style="transform:translate(-50%,-50%) rotate(-90deg) scaleX(0.87)">30.00</span></div>
<div class="dim" style="left:505.7px;top:178.5px;width:27.7px;height:9px;font-size:7.9px"><span class="dv" style="transform:translate(-50%,-50%) scaleX(0.87)">fx: 30.00</span></div>
<div class="dim" style="left:485.3px;top:202.6px;width:18.2px;height:8.9px;font-size:7.8px"><span class="dv" style="transform:translate(-50%,-50%) scaleX(0.87)">40.00</span></div>
<div class="dim" style="left:544.8px;top:183px;width:10.7px;height:25px;font-size:8.2px"><span class="dv" style="transform:translate(-50%,-50%) rotate(-90deg) scaleX(0.88)">fx: 1.60</span></div>
<div class="dim" style="left:457.5px;top:229.7px;width:9.5px;height:19.3px;font-size:8.2px"><span class="dv" style="transform:translate(-50%,-50%) rotate(-90deg) scaleX(0.88)">40.00</span></div>
<div class="dim" style="left:505.7px;top:256.4px;width:27.7px;height:9.1px;font-size:8px"><span class="dv" style="transform:translate(-50%,-50%) scaleX(0.86)">fx: 30.00</span></div>
<div class="dim" style="left:544.8px;top:260.5px;width:10.7px;height:25.5px;font-size:8.2px"><span class="dv" style="transform:translate(-50%,-50%) rotate(-90deg) scaleX(0.90)">fx: 1.60</span></div>
<div class="dim" style="left:268px;top:258.3px;width:10px;height:24.7px;font-size:8.2px"><span class="dv" style="transform:translate(-50%,-50%) rotate(-90deg) scaleX(0.87)">fx: 1.60</span></div>
<div class="dim" style="left:301.5px;top:273.5px;width:27.3px;height:9.5px;font-size:8.2px"><span class="dv" style="transform:translate(-50%,-50%) scaleX(0.83)">fx: 30.00</span></div>
<div class="dim" style="left:367.3px;top:265.5px;width:25.4px;height:9.4px;font-size:8.2px"><span class="dv" style="transform:translate(-50%,-50%) scaleX(0.90)">fx: 1.60</span></div>
<div class="dim" style="left:446px;top:265.5px;width:25px;height:9.5px;font-size:8.2px"><span class="dv" style="transform:translate(-50%,-50%) scaleX(0.88)">fx: 1.60</span></div>
<div class="dim" style="left:359.6px;top:295.8px;width:8.3px;height:27.6px;font-size:7.3px"><span class="dv" style="transform:translate(-50%,-50%) rotate(-90deg) scaleX(0.94)">fx: 30.00</span></div>
<div class="dim" style="left:436.8px;top:295.8px;width:9.2px;height:27.6px;font-size:8.1px"><span class="dv" style="transform:translate(-50%,-50%) rotate(-90deg) scaleX(0.85)">fx: 30.00</span></div>
<div class="dim" style="left:418.3px;top:353.7px;width:19.2px;height:8.8px;font-size:7.7px"><span class="dv" style="transform:translate(-50%,-50%) scaleX(0.93)">40.00</span></div>
<div class="dim" style="left:155.4px;top:221.3px;width:20px;height:8px;font-size:7.5px;transform:rotate(-40deg)"><span class="dv" style="transform:translate(-50%,-50%) scaleX(.85)">4.00</span></div>
  <!-- BROWSER (canvas-relative: abs x-176, y-70) -->
  <div class="abs" style="left:1px;top:1px;width:133px;height:10.800px;background:#f4f4f4"></div>
  <svg style="left:6px;top:5px" width="5" height="3" viewBox="0 0 10 6"><path d="M0 3 4 0v6zM10 3 6 0v6z" fill="#333"/><path d="M3 3h4" stroke="#333" stroke-width="1.500"/></svg>
  <span class="t" style="left:14px;top:4.500px;font-size:5.2px;color:#333">BROWSER</span>
  <div class="abs" style="left:125px;top:4.700px;width:3px;height:3px;border-radius:50%;background:#222"></div>
  <div class="abs" style="left:132px;top:3.500px;width:.7px;height:5.500px;background:#666"></div>
  <div class="abs" style="left:19px;top:14.500px;width:11px;height:8.500px;background:#f0f0f0"></div>
  <div class="abs" style="left:26px;top:25.600px;width:60px;height:8.600px;background:#f0f0f0"></div>
  <div class="abs" style="left:26px;top:36px;width:47px;height:8.600px;background:#f0f0f0"></div>
  <div class="abs" style="left:26px;top:46.600px;width:41px;height:8.600px;background:#f0f0f0"></div>
  <div class="abs" style="left:26px;top:57.200px;width:47px;height:8.600px;background:#f0f0f0"></div>
  <div class="abs" style="left:34px;top:68.200px;width:11px;height:8.300px;background:#f0f0f0"></div>
  <!-- row1 -->
  <svg style="left:11px;top:17px" width="3.500" height="3.500" viewBox="0 0 7 7"><path d="M7 0v7H0z" fill="#333"/></svg>
  <svg style="left:20px;top:16px" width="7" height="5" viewBox="0 0 14 10"><path d="M.5 5Q7-2.500 13.500 5 7 12.500.5 5z" fill="#fff" stroke="#777" stroke-width="1.200"/><circle cx="7" cy="5" r="2.500" fill="#666"/></svg>
  <div class="abs" style="left:30px;top:14.500px;width:42px;height:8.500px;background:#8c8c8c"></div>
  <svg style="left:32px;top:15.500px" width="5.500" height="6.500" viewBox="0 0 11 13"><path d="M.5.500h7L10.500 3.500V12.500H.5z" fill="#e8ecf4" stroke="#667" stroke-width=".9"/><path d="M2.500 5h6M2.500 7.500h6M2.500 10h6" stroke="#5a78b8" stroke-width=".9"/></svg>
  <span class="t" style="left:44.500px;top:16.500px;font-size:5.2px;color:#f2f2f2">(Unsaved)</span>
  <svg style="left:73.500px;top:15.500px" width="6.500" height="6.500" viewBox="0 0 13 13"><circle cx="6.500" cy="6.500" r="5.500" fill="#fff" stroke="#777" stroke-width="1.200"/><circle cx="6.500" cy="6.500" r="2.800" fill="#333"/></svg>
  <!-- row2 Document Settings -->
  <svg style="left:18.500px;top:28px" width="3" height="4" viewBox="0 0 6 8"><path d="M.7.700 5.300 4 .7 7.300z" fill="#fff" stroke="#555" stroke-width=".9"/></svg>
  <svg style="left:27px;top:26.500px" width="7" height="7" viewBox="0 0 16 16"><circle cx="8" cy="8" r="4.200" fill="none" stroke="#666" stroke-width="2.600"/><path d="M8 .8v2.400M8 12.800v2.400M.8 8h2.400M12.800 8h2.400M2.900 2.900l1.700 1.700M11.400 11.400l1.700 1.700M13.100 2.900l-1.700 1.700M4.600 11.400l-1.700 1.700" stroke="#666" stroke-width="2.200"/></svg>
  <div class="brow" style="left:38.500px;top:25.600px">Document Settings</div>
  <!-- row3 Named Views -->
  <svg style="left:18.500px;top:38.500px" width="3" height="4" viewBox="0 0 6 8"><path d="M.7.700 5.300 4 .7 7.300z" fill="#fff" stroke="#555" stroke-width=".9"/></svg>
  <svg style="left:27px;top:37.500px" width="7.500" height="6" viewBox="0 0 15 12"><path d="M0 1.500h5.500l1.500 2H15V12H0z" fill="#8a8a8a"/></svg>
  <div class="brow" style="left:38.500px;top:36px">Named Views</div>
  <!-- row4 Origin -->
  <svg style="left:18.500px;top:49px" width="3" height="4" viewBox="0 0 6 8"><path d="M.7.700 5.300 4 .7 7.300z" fill="#fff" stroke="#555" stroke-width=".9"/></svg>
  <svg style="left:27px;top:48.500px" width="7" height="5" viewBox="0 0 14 10"><path d="M.5 5Q7-2.500 13.500 5 7 12.500.5 5z" fill="#f4f4f4" stroke="#ccc" stroke-width="1.200"/><circle cx="7" cy="5" r="2.500" fill="#d0d0d0"/></svg>
  <svg style="left:38px;top:48px" width="7.500" height="6" viewBox="0 0 15 12"><path d="M0 1.500h5.500l1.500 2H15V12H0z" fill="#8a8a8a"/></svg>
  <div class="brow" style="left:49px;top:46.600px">Origin</div>
  <!-- row5 Sketches -->
  <svg style="left:17.500px;top:59.500px" width="3.500" height="3.500" viewBox="0 0 7 7"><path d="M7 0v7H0z" fill="#333"/></svg>
  <svg style="left:27px;top:59px" width="7" height="5" viewBox="0 0 14 10"><path d="M.5 5Q7-2.500 13.500 5 7 12.500.5 5z" fill="#fff" stroke="#777" stroke-width="1.200"/><circle cx="7" cy="5" r="2.500" fill="#666"/></svg>
  <svg style="left:38px;top:58.500px" width="7.500" height="6" viewBox="0 0 15 12"><path d="M0 1.500h5.500l1.500 2H15V12H0z" fill="#8a8a8a"/></svg>
  <div class="brow" style="left:49px;top:57.200px">Sketches</div>
  <div class="abs" style="left:37px;top:65px;width:37px;height:1px;border-bottom:.8px dotted #8090c0"></div>
  <!-- row6 Sketch1 -->
  <svg style="left:35.500px;top:69.700px" width="7" height="5" viewBox="0 0 14 10"><path d="M.5 5Q7-2.500 13.500 5 7 12.500.5 5z" fill="#fff" stroke="#777" stroke-width="1.200"/><circle cx="7" cy="5" r="2.500" fill="#666"/></svg>
  <div class="abs" style="left:45px;top:68.200px;width:38.500px;height:8.300px;background:#1687d9"></div>
  <svg style="left:51.500px;top:69.500px" width="6" height="6" viewBox="0 0 12 12"><path d="M1 11l2-5 5-5 3 3-5 5z" fill="#e8c060" stroke="#765" stroke-width=".7"/><path d="M1 11l2-1-1-1z" fill="#333"/></svg>
  <span class="t" style="left:60px;top:69.800px;font-size:5.2px;color:#fff">Sketch1</span>

  <!-- CONTEXT MENU -->
  <div id="ctx" class="abs">
    <div class="abs" style="left:.5px;top:42.500px;width:76.500px;height:10px;background:#cfcfcf"></div>
    <svg style="left:1.800px;top:3.500px" width="6.500" height="6.500" viewBox="0 0 13 13"><rect x="0" y="5" width="10" height="8" fill="#7fae5a"/><rect x="2" y="2" width="8" height="5" fill="#d9a04a"/><path d="M9 0v6M6 3h6" stroke="#2a8a2a" stroke-width="1.800"/></svg>
    <span class="t" style="top:4.300px">Create Selection Set</span>
    <svg style="left:1.800px;top:14px" width="6.500" height="6.500" viewBox="0 0 13 13"><path d="M1 3l3-2v10l-3 2z" fill="#e8a040"/><path d="M5.500 3l3-2v10l-3 2z" fill="#f0c060"/><path d="M10 3l3-2v10l-3 2z" fill="#58a858"/></svg>
    <span class="t" style="top:14.600px">Offset Plane</span>
    <div class="hr" style="top:21.1px"></div>
    <svg style="left:1.800px;top:25px" width="6.500" height="6.500" viewBox="0 0 13 13"><path d="M1 9l6-6 5 2-6 6z" fill="#b8d4ee" stroke="#7a9abc" stroke-width=".8"/><path d="M7 1v4" stroke="#888" stroke-width="1"/></svg>
    <span class="t" style="top:25.700px">Slice Sketch</span>
    <div class="hr" style="top:32.3px"></div>
    <span class="t" style="top:35.500px">Paste</span><span class="t k" style="top:35.500px">&#8984;V</span>
    <svg style="left:1.800px;top:44px" width="7" height="6.500" viewBox="0 0 14 13"><rect x=".5" y=".5" width="13" height="12" fill="#f4f4f4" stroke="#666" stroke-width="1"/><rect x=".5" y="6" width="13" height="4" fill="#555"/><path d="M2 3h10" stroke="#999" stroke-width="1"/></svg>
    <span class="t" style="top:45px">Save As DXF</span>
    <svg style="left:1.800px;top:55.500px" width="6.500" height="6.500" viewBox="0 0 13 13"><path d="M1.500 1.500l10 10M11.500 1.500l-10 10" stroke="#e02020" stroke-width="2.600"/></svg>
    <span class="t" style="top:56.700px">Delete</span><span class="t k" style="top:56.700px">&#8998;</span>
    <div class="hr" style="top:63.4px"></div>
    <svg style="left:1.800px;top:66.500px" width="6.500" height="6.500" viewBox="0 0 13 13"><path d="M1 5h11v7H1z" fill="#9aa0b0"/><path d="M3 2h7l2 3H1z" fill="#c4c8d4"/><path d="M1 8h11M5 5v7M8.500 5v7" stroke="#667" stroke-width=".7"/></svg>
    <span class="t" style="top:67.700px">Look At</span>
    <div class="hr" style="top:74.1px"></div>
    <svg style="left:1.800px;top:78.300px" width="7" height="5" viewBox="0 0 14 10"><path d="M.5 5Q7-2.500 13.500 5 7 12.500.5 5z" fill="#f4f4f4" stroke="#999" stroke-width="1.200"/><circle cx="7" cy="5" r="2.500" fill="#aaa"/></svg>
    <span class="t" style="top:78.500px">Hide Profile</span>
    <svg style="left:1.800px;top:88.800px" width="7" height="5" viewBox="0 0 14 10"><path d="M.5 5Q7-2.500 13.500 5 7 12.500.5 5z" fill="#f4f4f4" stroke="#999" stroke-width="1.200"/><circle cx="7" cy="5" r="2.500" fill="#aaa"/></svg>
    <span class="t" style="top:89px">Show/Hide</span><span class="t k" style="top:89px">V</span>
    <div class="hr" style="top:95.9px"></div>
    <span class="t" style="top:99.500px">Find in Window</span>
    <span class="t" style="top:108.700px">Find in Timeline</span>
  </div>

  <!-- VIEWCUBE -->
  <div class="abs" style="left:684.500px;top:16px;width:23px;height:23px;background:#e4e6e8;border:.6px solid #cfd2d5;box-shadow:.5px .8px 1.500px rgba(0,0,0,.2)"></div>
  <div class="abs" style="left:688.500px;top:20px;width:15px;height:15px;background:#e9ebed"></div>
  <span class="t" style="left:690.500px;top:25px;font-size:5.4px;color:#7a8088">TOP</span>
  <span class="t" style="left:681px;top:12.500px;font-size:5.2px;color:#3cc43c">Y</span>
  <span class="t" style="left:709px;top:15.500px;font-size:5.2px;color:#e84040">X</span>
  <span class="t" style="left:684px;top:40.500px;font-size:5.2px;color:#4a5ae8">Z</span>

  <!-- SKETCH PALETTE -->
  <div id="pal" class="abs">
    <div class="abs" style="left:0;top:0;width:109px;height:10px;background:#f8f8f8;border-bottom:.5px solid #dcdcdc"></div>
    <div class="abs" style="left:2px;top:2.500px;width:.7px;height:5px;background:#777"></div>
    <div class="abs" style="left:5px;top:3.200px;width:3.700px;height:3.700px;border-radius:50%;background:#222"></div>
    <span class="t" style="left:10px;top:2.800px;font-size:4.9px;letter-spacing:-.15px">SKETCH PALETTE</span>
    <svg style="left:102.500px;top:3.500px" width="5" height="3" viewBox="0 0 10 6"><path d="M0 0l4 3-4 3zM5 0l4 3-4 3z" fill="#222"/></svg>
    <svg style="left:2.500px;top:15px" width="3.500" height="2.600" viewBox="0 0 7 5"><path d="M0 0h7L3.500 5z" fill="#222"/></svg>
    <span class="t" style="left:8.500px;top:14px">Options</span>
    <span class="t" style="top:27.500px">Construction</span>
    <div class="abs" style="left:74px;top:24.500px;width:10.500px;height:11px;background:#1b8ad3"></div>
    <svg style="left:76.5px;top:27px" width="5.500" height="6" viewBox="0 0 11 12"><path d="M10 1 1.500 6 10 11" fill="none" stroke="#9fd0f2" stroke-width="1.400"/></svg>
    <span class="t" style="top:40.500px">Look At</span>
    <svg style="left:76px;top:38.500px" width="6.500" height="6.500" viewBox="0 0 13 13"><path d="M1 5h11v7H1z" fill="#9aa0b0"/><path d="M3 2h7l2 3H1z" fill="#c4c8d4"/><path d="M1 8h11M5 5v7M8.500 5v7" stroke="#667" stroke-width=".7"/></svg>
    <span class="t" style="top:53.700px">Sketch Grid</span><div class="cb on" style="top:53px"></div>
    <span class="t" style="top:66.800px">Snap</span><div class="cb on" style="top:66.200px"></div>
    <span class="t" style="top:80px">Slice</span><div class="cb" style="top:79.400px"></div>
    <span class="t" style="top:93.200px">Show Profile</span><div class="cb on" style="top:92.600px"></div>
    <span class="t" style="top:106.400px">Show Points</span><div class="cb on" style="top:105.800px"></div>
    <span class="t" style="top:119.600px">Show Dimensions</span><div class="cb on" style="top:119px"></div>
    <span class="t" style="top:132.700px">Show Constraints</span><div class="cb on" style="top:132.100px"></div>
    <span class="t" style="top:145.900px">Show Projected Geometries</span><div class="cb on" style="top:145.300px"></div>
    <span class="t" style="top:159px">3D Sketch</span><div class="cb" style="top:158.400px"></div>
    <div class="abs" style="left:1px;top:178.500px;width:107px;height:.6px;background:#d0d0d0"></div>
    <div class="abs" style="left:69px;top:181px;width:38.5px;height:9px;background:#e9e9e9;border:.5px solid #bdbdbd;border-radius:1px"></div>
    <span class="t" style="left:71.5px;top:183px;font-size:5.6px">Finish Sketch</span>
  </div>

  <!-- COMMENTS bar -->
  <div class="abs" style="left:1px;top:428.800px;width:133px;height:10.800px;background:#f3f3f3"></div>
  <span class="t" style="left:13.500px;top:431.700px;font-size:5px;color:#333">COMMENTS</span>
  <div class="abs" style="left:125px;top:432.500px;width:3px;height:3px;border-radius:50%;background:#222"></div>
  <div class="abs" style="left:132px;top:431.300px;width:.7px;height:5.500px;background:#666"></div>

  <!-- NAV BAR -->
  <div class="abs" style="left:307px;top:430px;width:108px;height:9.500px;background:#f3f3f3"></div>
  <svg style="left:309px;top:430.500px" width="106" height="8" viewBox="0 0 106 8">
    <g fill="#777" stroke="none">
      <path d="M3.500 0l1.500 2h-1v1.500h1.500v-1l2 1.500-2 1.500v-1H4v1.500h1L3.500 8 2 6h1V4.500H1.500v1L-.5 4l2-1.500v1H3V2H2z"/>
      <path d="M9 3h3L10.500 5z" fill="#222"/>
      <path d="M14 3h7v4.500h-7zM15 1.500h5L21 3h-7z"/>
      <path d="M26 7.500c-1.500-1-2-2.500-2-3.500l1 .5V1.500h1V4h.5V.8h1V4h.5V1.300h1V4h.5V2.300h1V5.500c0 1-.5 1.500-1 2z"/>
    </g>
    <circle cx="39" cy="3.200" r="2.400" fill="none" stroke="#777" stroke-width="1"/><path d="M40.800 5l2 2.300" stroke="#777" stroke-width="1.200"/>
    <circle cx="50" cy="3.200" r="2.400" fill="none" stroke="#777" stroke-width="1"/><path d="M51.800 5l2 2.300" stroke="#777" stroke-width="1.200"/>
    <path d="M56 3h3L57.500 5z" fill="#222"/>
    <rect x="65.500" y=".8" width="7.500" height="5" fill="#7a9ad0" stroke="#667" stroke-width=".6"/><path d="M67.500 7.300h3.500" stroke="#667" stroke-width="1"/>
    <path d="M75 3h3L76.500 5z" fill="#222"/>
    <rect x="79" y=".8" width="7" height="6" fill="#a4acb8" stroke="#778" stroke-width=".6"/>
    <path d="M88 3h3L89.500 5z" fill="#222"/>
    <rect x="93" y=".8" width="7.500" height="6" fill="#6a8ec8" stroke="#556" stroke-width=".6"/><path d="M93 3.800h7.500M96.700.8v6" stroke="#dde" stroke-width=".6"/>
    <path d="M102 3h3L103.500 5z" fill="#222"/>
  </svg>
  <span class="t" style="left:690px;top:433px;font-size:5px;color:#222">Sketch1</span>
</div><!-- /canvas -->

  <!-- TIMELINE -->
  <div id="timeline" class="abs">
    <svg style="left:5px;top:7px" width="55" height="7" viewBox="0 0 55 7">
      <g fill="#555"><path d="M0 0h1.200v7H0zM6 0v7L1.500 3.500z"/>
      <path d="M15 0v7L11 3.500z"/><rect x="15" y="2.300" width="1.800" height="2.400"/>
      <path d="M23 0v7l4.500-3.500z"/>
      <path d="M35 0v7l4-3.500z"/><rect x="33.200" y="2.300" width="1.800" height="2.400"/>
      <path d="M45 0v7l4.500-3.500zM49.800 0H51v7h-1.200z"/></g>
    </svg>
    <svg style="left:64.500px;top:4.500px" width="8" height="9" viewBox="0 0 16 18"><rect x="1" y="2" width="12" height="14" fill="#eef2f8" stroke="#9ab" stroke-width="1"/><path d="M3 6h8M3 9h8M3 12h5" stroke="#9ab" stroke-width="1"/><path d="M6 14l2-4 6-6 2 2-6 6z" fill="#e8c060" stroke="#765" stroke-width=".7"/></svg>
    <div class="abs" style="left:73px;top:4px;width:1.300px;height:14px;background:#444"></div>
    <svg style="left:71.200px;top:3.500px" width="5" height="4" viewBox="0 0 10 8"><path d="M0 0h10L5 8z" fill="#444"/></svg>
    <svg style="left:711px;top:6.500px" width="7" height="7" viewBox="0 0 16 16"><circle cx="8" cy="8" r="4.200" fill="none" stroke="#777" stroke-width="2.600"/><path d="M8 .8v2.400M8 12.800v2.400M.8 8h2.400M12.800 8h2.400M2.900 2.900l1.700 1.700M11.400 11.400l1.700 1.700M13.100 2.900l-1.700 1.700M4.600 11.400l-1.700 1.700" stroke="#777" stroke-width="2.200"/></svg>
  </div>
</div><!-- /fusion -->
<div id="dock" class="abs">
<svg class="di" style="left:2.8px;top:3.5px" width="20" height="20" viewBox="0 0 40 40"><rect x="1" y="3" width="38" height="34" rx="4" fill="#e9eef5"/><path d="M1 7a4 4 0 0 1 4-4h16c-3 9-4 14-4 19h5c0 6 0 10 1 15H5a4 4 0 0 1-4-4z" fill="#3d9cf0"/><path d="M11 12v5M29 12v5" stroke="#223" stroke-width="2"/><path d="M8 25c6 7 18 7 24 0" fill="none" stroke="#223" stroke-width="1.800"/></svg>
<svg class="di" style="left:26px;top:3.5px" width="20" height="20" viewBox="0 0 40 40"><path d="M20 1 31 13h-6v14h6L20 39 9 27h6V13H9z" fill="#3db4ee" stroke="#e8f6ff" stroke-width="2.500"/></svg>
<svg class="di" style="left:50px;top:3.5px" width="20" height="20" viewBox="0 0 40 40"><rect x="1" y="1" width="38" height="38" rx="0" fill="#2a0a3a" stroke="#a060c0" stroke-width="2"/><text x="20" y="28" font-family="Liberation Sans,sans-serif" font-size="22" text-anchor="middle" fill="#e0a0f4">Pr</text></svg>
<svg class="di" style="left:72.8px;top:3.5px" width="20" height="20" viewBox="0 0 40 40"><rect x="1" y="1" width="38" height="38" rx="0" fill="#1f0a44" stroke="#8a68d0" stroke-width="2"/><text x="20" y="28" font-family="Liberation Sans,sans-serif" font-size="22" text-anchor="middle" fill="#d4bcff">Ae</text></svg>
<svg class="di" style="left:96px;top:3.5px" width="20" height="20" viewBox="0 0 40 40"><rect x="1" y="1" width="38" height="38" rx="0" fill="#2e1400" stroke="#c87a20" stroke-width="2"/><text x="20" y="28" font-family="Liberation Sans,sans-serif" font-size="22" text-anchor="middle" fill="#ff9a1e">Ai</text></svg>
<svg class="di" style="left:119px;top:3.5px" width="20" height="20" viewBox="0 0 40 40"><rect x="1" y="1" width="38" height="38" rx="6" fill="#0a1e30" stroke="#48b0d8" stroke-width="2"/><text x="20" y="28" font-family="Liberation Sans,sans-serif" font-size="22" text-anchor="middle" fill="#d8f2ff">Ps</text></svg>
<svg class="di" style="left:143px;top:3.5px" width="20" height="20" viewBox="0 0 40 40"><rect x="1" y="1" width="38" height="38" rx="3" fill="#f4e2c8"/><path d="M12 34V8h18v6H19v5h9v6h-9v9z" fill="#e8821e"/><path d="M12 34l7-3V14l-7-6z" fill="#b85a10"/></svg>
<svg class="di" style="left:166px;top:3.5px" width="20" height="20" viewBox="0 0 40 40"><rect x="2" y="2" width="36" height="36" rx="5" fill="#f7e11c"/><path d="M20 8c-8 0-14 5-14 11 0 4 2.500 7 6 9l-1.500 6 6-4c1 .2 2.300.300 3.500.3 8 0 14-5 14-11.300S28 8 20 8z" fill="#3a2a22"/><text x="20" y="23" font-family="Liberation Sans,sans-serif" font-size="9" font-weight="bold" text-anchor="middle" fill="#f7e11c">TALK</text></svg>
<svg class="di" style="left:189px;top:3.5px" width="20" height="20" viewBox="0 0 40 40"><circle cx="20" cy="20" r="19" fill="#12939a"/><path d="M8 20c0-7 9-7 12 0s12 7 12 0-9-7-12 0-12 7-12 0z" fill="none" stroke="#fff" stroke-width="3"/></svg>
<svg class="di" style="left:212.8px;top:3.5px" width="20" height="20" viewBox="0 0 40 40"><circle cx="20" cy="20" r="19" fill="#5b8fd8" stroke="#c8dcf4" stroke-width="1.500"/><text x="20" y="27" font-family="Liberation Sans,sans-serif" font-size="20" font-weight="bold" text-anchor="middle" fill="#fff">qb</text></svg>
<svg class="di" style="left:236px;top:3.5px" width="20" height="20" viewBox="0 0 40 40"><circle cx="20" cy="21" r="18" fill="#2a8cf4"/><path d="M13 30l10-18M27 30 17 12M9 25h22" stroke="#fff" stroke-width="3" stroke-linecap="round"/><circle cx="33" cy="7" r="6.500" fill="#f0453a"/><text x="33" y="10" font-family="Liberation Sans,sans-serif" font-size="9" text-anchor="middle" fill="#fff">6</text></svg>
<svg class="di" style="left:259px;top:3.5px" width="20" height="20" viewBox="0 0 40 40"><circle cx="20" cy="20" r="19" fill="#e8eaee"/><circle cx="20" cy="20" r="16.500" fill="#2a9af4"/><path d="M31 9 22.500 22.500 17.500 17.500z" fill="#f04a3a"/><path d="M9 31l8.500-13.500 5 5z" fill="#fff"/></svg>
<svg class="di" style="left:282px;top:3.5px" width="20" height="20" viewBox="0 0 40 40"><circle cx="20" cy="20" r="19" fill="#e54335"/><path d="M20 20 3.500 10.500A19 19 0 0 0 11 37z" fill="#35a853"/><path d="M20 20l-9 17A19 19 0 0 0 37 11H20z" fill="#fbc02d"/><circle cx="20" cy="20" r="8.500" fill="#fff"/><circle cx="20" cy="20" r="6.700" fill="#4285f4"/></svg>
<svg class="di" style="left:306px;top:3.5px" width="20" height="20" viewBox="0 0 40 40"><circle cx="22" cy="22" r="16" fill="#4a3a36"/><path d="M2 20 20 12l6 3 8-5-3 8 6 5-12 1-5 8-3-9z" fill="#e8e2da"/><circle cx="24" cy="20" r="4" fill="#e86a2a"/></svg>
<svg class="di" style="left:329px;top:3.5px" width="20" height="20" viewBox="0 0 40 40"><rect x="2" y="2" width="36" height="36" rx="6" fill="#fafafa"/><path d="M2 8a6 6 0 0 1 6-6h24a6 6 0 0 1 6 6v5H2z" fill="#f0453a"/><text x="20" y="11" font-family="Liberation Sans,sans-serif" font-size="8" text-anchor="middle" fill="#fff">2월</text><text x="20" y="33" font-family="Liberation Sans,sans-serif" font-size="21" text-anchor="middle" fill="#333">18</text></svg>
<svg class="di" style="left:352.7px;top:3.5px" width="20" height="20" viewBox="0 0 40 40"><circle cx="20" cy="20" r="19" fill="#f4f4f6"/><circle cx="20" cy="20" r="16" fill="#fff" stroke="#e860b8" stroke-width="1"/><path d="M16 27V13l11-2.500V24" fill="none" stroke="#e8409a" stroke-width="2.500"/><circle cx="13.500" cy="27" r="3.500" fill="#e8409a"/><circle cx="24.500" cy="24" r="3.500" fill="#7a5af0"/></svg>
<svg class="di" style="left:375px;top:3.5px" width="20" height="20" viewBox="0 0 40 40"><circle cx="20" cy="20" r="19" fill="#b8642a"/><circle cx="20" cy="20" r="15" fill="#8a4418"/><path d="M23 7 13 22h6l-2 11 10-15h-6z" fill="#f8e8c8"/></svg>
<svg class="di" style="left:399.8px;top:3.5px" width="20" height="20" viewBox="0 0 40 40"><rect x="3" y="2" width="34" height="36" rx="4" fill="#fdfdf6"/><path d="M3 6a4 4 0 0 1 4-4h26a4 4 0 0 1 4 4v6H3z" fill="#f8d84a"/><path d="M7 19h26M7 25h26M7 31h26" stroke="#e4e4dc" stroke-width="1.200"/></svg>
<svg class="di" style="left:422.8px;top:3.5px" width="20" height="20" viewBox="0 0 40 40"><rect x="4" y="12" width="32" height="26" rx="2" fill="#c49a4a"/><rect x="4" y="12" width="32" height="8" fill="#a87a2a"/><path d="M12 2l8 10 8-10z" fill="#e8d9a0"/><circle cx="20" cy="27" r="7" fill="#e8d9a0"/><path d="M20 22l4 5h-8zM16 30h8" stroke="#8a6a2a" stroke-width="1.500" fill="none"/></svg>
<svg class="di" style="left:445.7px;top:3.5px" width="20" height="20" viewBox="0 0 40 40"><rect x="1" y="1" width="38" height="38" rx="8" fill="#8a8e94"/><circle cx="20" cy="20" r="15" fill="#d4d6da" stroke="#55585e" stroke-width="2"/><circle cx="20" cy="20" r="9" fill="#6a6e74"/><circle cx="20" cy="20" r="4" fill="#c4c6ca"/></svg>
<svg class="di" style="left:468.7px;top:3.5px" width="20" height="20" viewBox="0 0 40 40"><path d="M29 3 12 19 5 13.500 2 15l6.500 5L2 25l3 1.500 7-5.500L29 37l9-4V7z" fill="#2a8ce8"/><path d="M29 12 18 20l11 8z" fill="#25262e"/></svg>
<svg class="di" style="left:492.8px;top:3.5px" width="20" height="20" viewBox="0 0 40 40"><rect x="1" y="1" width="38" height="38" rx="5" fill="#1e8fe0"/><rect x="6" y="6" width="28" height="28" rx="2" fill="#fff"/><path d="M17 11h-5v18h5M23 11h5v18h-5" fill="none" stroke="#223" stroke-width="3.500"/></svg>
<svg class="di" style="left:516px;top:3.5px" width="20" height="20" viewBox="0 0 40 40"><path d="M6 5h30l-4 22H2z" fill="#f06aa8"/><path d="M6 5h30l-2 9H4.500z" fill="#f89ac8"/><path d="M14 31h12l2 5H12z" fill="#d8d8e0"/></svg>
<div class="abs" style="left:542.6px;top:4px;width:.7px;height:21px;background:#555a66"></div>
<svg class="di" style="left:549.5px;top:3.5px" width="20" height="20" viewBox="0 0 40 40"><rect x="2" y="4" width="36" height="32" rx="3" fill="#d0d0d4"/><rect x="3.500" y="7" width="33" height="27.500" rx="1.500" fill="#16171c"/><path d="M8 13l4 3-4 3M14 20h6" stroke="#e8e8e8" stroke-width="1.500" fill="none"/></svg>
<svg class="di" style="left:572px;top:3.5px" width="20" height="20" viewBox="0 0 40 40"><rect x="3" y="3" width="30" height="26" fill="#f4f0e4" stroke="#b8b4a4" stroke-width="1"/><rect x="5.500" y="5.500" width="25" height="17" fill="#5a9ad4"/><path d="M5.500 22.500l8-9 7 6 4-3 6 6z" fill="#e4c48a"/><circle cx="29" cy="29" r="9" fill="#c4ccd8" stroke="#555" stroke-width="2.500"/><circle cx="29" cy="29" r="5" fill="#e8f0fc"/></svg>
<svg class="di" style="left:595px;top:3.5px" width="20" height="20" viewBox="0 0 40 40"><rect x="1" y="3" width="38" height="34" rx="3" fill="#3a3f44"/><rect x="4" y="6" width="32" height="28" fill="#161c1a"/><path d="M4 22h7l2-9 3 16 3-11 2 6 3-4h12" fill="none" stroke="#4ae08a" stroke-width="1.500"/><path d="M4 13h32M4 27h32M13 6v28M26 6v28" stroke="#2a4a3a" stroke-width=".6"/></svg>
<div class="abs" style="left:621.8px;top:4px;width:.7px;height:21px;background:#555a66"></div>
<svg class="di" style="left:627.7px;top:3.5px" width="20" height="20" viewBox="0 0 40 40"><path d="M1 7h13l4 4h21v25H1z" fill="#4aa0dc"/><path d="M1 13h38v23H1z" fill="#6ab8ea"/><circle cx="20" cy="24.500" r="6.500" fill="#4a9ad4"/><path d="M20 20v8M16.500 25l3.500 3.500 3.500-3.500" stroke="#8acaf4" stroke-width="1.800" fill="none"/></svg>
<svg class="di" style="left:651px;top:3.5px" width="20" height="20" viewBox="0 0 40 40"><path d="M7 9h26l-3 28H10z" fill="#c8ccd0" stroke="#8a8e94" stroke-width="1"/><ellipse cx="20" cy="9" rx="13" ry="3.500" fill="#e4e6e8" stroke="#8a8e94" stroke-width="1"/><path d="M14 14l1.500 20M20 14v20M26 14l-1.500 20" stroke="#9a9ea4" stroke-width="1.200"/><path d="M12 7l4-4 5 3 5-3 3 4z" fill="#f4f4f4"/></svg>
<div class="dot" style="left:12px"></div>
<div class="dot" style="left:105.2px"></div>
<div class="dot" style="left:128.2px"></div>
<div class="dot" style="left:152.2px"></div>
<div class="dot" style="left:175.2px"></div>
<div class="dot" style="left:291.2px"></div>
<div class="dot" style="left:477.9px"></div>
</div>
</div>
</body>
</html>
